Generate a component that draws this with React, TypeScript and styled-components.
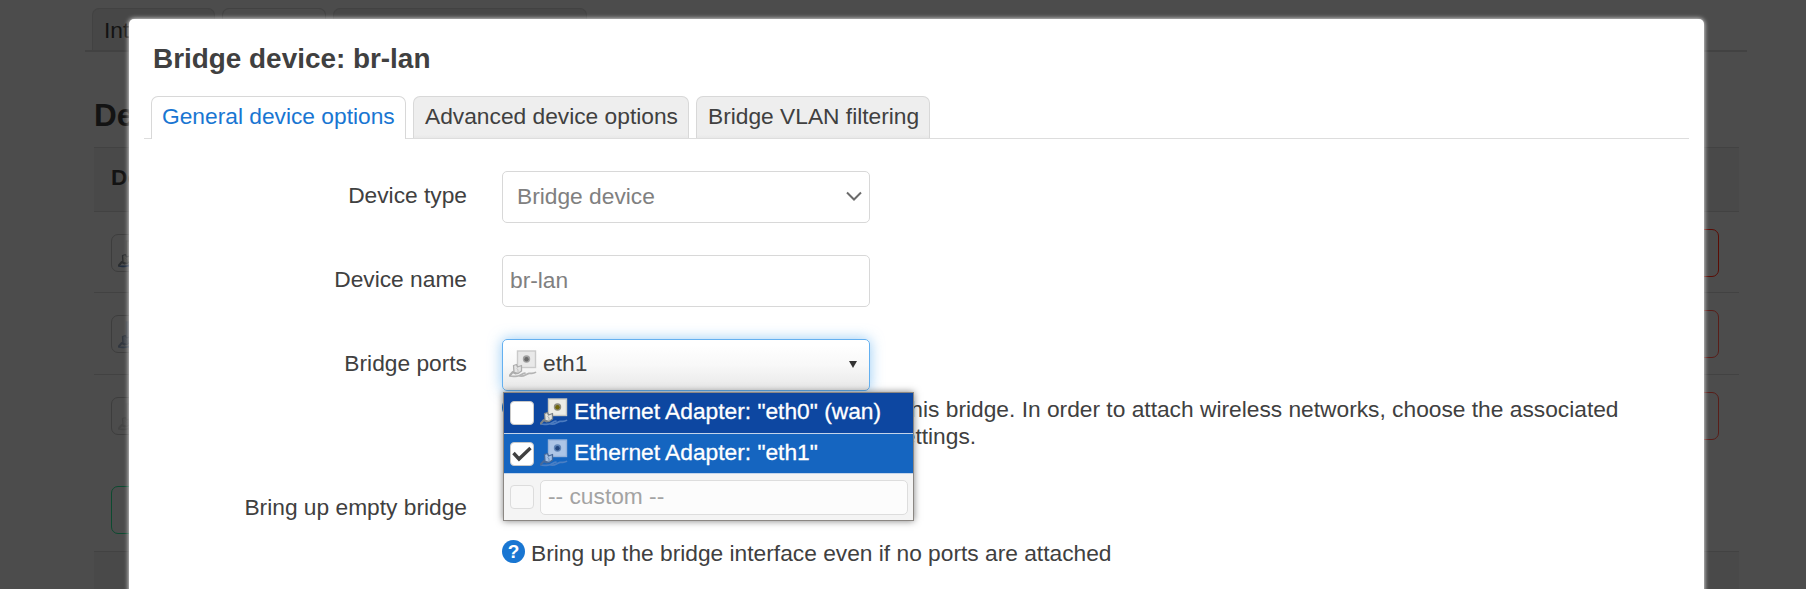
import React from "react";
import styled, { createGlobalStyle } from "styled-components";

const Global = createGlobalStyle`
  * { box-sizing: border-box; }
  html, body { margin: 0; height: 589px; overflow: hidden; background: #4c4c4c; }
  body { font: 22.75px/27px "Liberation Sans", Arial, sans-serif; color: #404040; }
`;

const Page = styled.div`
  position: relative;
  width: 1806px;
  height: 589px;
  overflow: hidden;
  background: #4c4c4c;
  color: #131313;
`;
const PageTabs = styled.div`
  display: flex;
  gap: 7px;
  height: 52px;
  margin: 0 59px 0 85px;
  padding: 8px 0 0 7px;
  border-bottom: 2px solid #424242;
`;
const PageTab = styled.div<{ $w: number; $active?: boolean }>`
  width: ${(p) => p.$w}px;
  height: ${(p) => (p.$active ? 44 : 42)}px;
  padding: 8px 11px;
  border: 1px solid #424242;
  border-bottom: 0;
  border-radius: 7px 7px 0 0;
  background: ${(p) => (p.$active ? "#4c4c4c" : "#474747")};
`;
const PageTitle = styled.h3`
  margin: 0 0 0 94px;
  height: 95px;
  padding-top: 43px;
  font-size: 31.5px;
  line-height: 40px;
`;
const Table = styled.div`
  margin: 0 67px 0 94px;
`;
const Row = styled.div<{ $h: number; $shade?: boolean }>`
  display: flex;
  align-items: center;
  justify-content: space-between;
  height: ${(p) => p.$h}px;
  padding: ${(p) => (p.$shade ? "0 20px 4px 17px" : "1px 20px 0 17px")};
  border-top: 1px solid #424242;
  background: ${(p) => (p.$shade ? "#494949" : "transparent")};
  font-weight: bold;
`;
const Badge = styled.div<{ $dim: number }>`
  width: 120px;
  height: 38px;
  padding: 5px 6px;
  border: 1px solid #3d3d3d;
  border-radius: 7px;
  svg { display: block; filter: brightness(0.32); opacity: ${(p) => p.$dim}; }
`;
const ActionButton = styled.div<{ $c: string }>`
  width: 100px;
  height: 48px;
  border: 1px solid ${(p) => p.$c};
  border-radius: 7px;
`;
const AddBar = styled.div`
  height: 95px;
  padding: 30px 17px 0;
`;

const Modal = styled.div`
  position: absolute;
  top: 19px;
  left: 129px;
  width: 1575px;
  height: 640px;
  padding: 19px 15px;
  border-radius: 5px;
  background: #fff;
  box-shadow: 0 0 5px #fff;
  color: #404040;
`;
const Title = styled.h4`
  height: 58px;
  margin: 0 0 0 9px;
  padding-top: 1px;
  font-size: 27.9px;
  line-height: 40px;
`;
const Tabs = styled.div`
  display: flex;
  gap: 7px;
  height: 43px;
  padding-left: 7px;
  border-bottom: 1px solid #ddd;
`;
const Tab = styled.div<{ $w: number; $active?: boolean }>`
  width: ${(p) => p.$w}px;
  height: ${(p) => (p.$active ? 43 : 42)}px;
  border: 1px solid #d8d8d8;
  border-bottom: 0;
  border-radius: 7px 7px 0 0;
  padding: 6px 0 0 ${(p) => (p.$active ? 10 : 11)}px;
  white-space: nowrap;
  color: ${(p) => (p.$active ? "#1976d2" : "#404040")};
  background: ${(p) => (p.$active ? "#fff" : "linear-gradient(#eee 92%, #e8e8e8)")};
`;
const Form = styled.div`
  padding-top: 32px;
`;
const Field = styled.div<{ $h: number }>`
  display: grid;
  grid-template-columns: 323px 1fr;
  column-gap: 35px;
  height: ${(p) => p.$h}px;
`;
const Label = styled.label`
  padding-top: 11px;
  text-align: right;
`;
const Control = styled.div`
  position: relative;
`;
const Box = styled.div<{ $pad: number }>`
  display: flex;
  align-items: center;
  justify-content: space-between;
  width: 368px;
  height: 52px;
  padding: 0 7px 1px ${(p) => p.$pad}px;
  border: 1px solid #d8d8d8;
  border-radius: 5px;
  color: #808080;
`;
const Dropdown = styled.div`
  display: flex;
  align-items: center;
  width: 368px;
  height: 52px;
  padding: 0 12px 2px 6px;
  border: 1px solid #64b0f0;
  border-radius: 5px;
  background: linear-gradient(#fff 10%, #f8f8f8 50%, #e8e8e8);
  box-shadow: 0 0 14px rgba(82, 168, 236, 0.6);
`;
const DropdownText = styled.span`
  flex: 1;
  padding: 0 0 1px 6px;
`;
const Menu = styled.div`
  position: absolute;
  z-index: 2;
  top: 53px;
  left: 1px;
  width: 411px;
  border: 1px solid #8b8783;
  background: #f4f4f4;
  box-shadow: 0 0 7px rgba(0, 0, 0, 0.5);
`;
const Item = styled.div<{ $bg: string; $h: number }>`
  display: flex;
  align-items: center;
  height: ${(p) => p.$h}px;
  padding-left: 6px;
  border-bottom: 1px solid #c3d4ea;
  background: ${(p) => p.$bg};
  color: #fff;
  white-space: nowrap;
  &:last-child { border-bottom: 0; }
`;
const ItemText = styled.span`
  padding: 0 0 3px 6px;
  -webkit-text-stroke: 0.3px #fff;
`;
const ItemIcon = styled.span`
  display: flex;
  padding-bottom: 2px;
`;
const Check = styled.span<{ $dim?: boolean }>`
  display: flex;
  align-items: center;
  justify-content: center;
  width: 24px;
  height: 24px;
  margin-right: 6px;
  border: 1px solid ${(p) => (p.$dim ? "#dcdcdc" : "#c8c8c8")};
  border-radius: 4px;
  background: ${(p) => (p.$dim ? "#f8f8f8" : "#fff")};
`;
const CustomInput = styled.div`
  width: 368px;
  height: 35px;
  padding: 2px 7px;
  border: 1px solid #ddd;
  border-radius: 5px;
  background: #fcfcfc;
  color: #a3a3a3;
`;
const Help = styled.div<{ $top: number }>`
  display: flex;
  gap: 6px;
  padding-top: ${(p) => p.$top}px;
  white-space: nowrap;
`;
const HelpText = styled.div`
  white-space: nowrap;
`;
const HelpIcon = styled.span`
  display: flex;
  align-items: center;
  justify-content: center;
  width: 23px;
  height: 23px;
  border-radius: 50%;
  background: #1976d2;
  color: #fff;
  font-size: 19px;
  font-weight: bold;
`;

type Tone = "grey" | "color" | "blue";
const tones = {
  grey: { plate: "#e9e9e9", edge: "#cacaca", hole: "#a2a2a2", core: "#6a6a6a", plug: "#e4e4e4", line: "#adadad", cable: "#b4b4b4" },
  color: { plate: "#ecece6", edge: "#c9c9c2", hole: "#8d8c80", core: "#6f6608", plug: "#e3e3dc", line: "#7b8288", cable: "#4d7cc0" },
  blue: { plate: "#adc5e6", edge: "#97b3da", hole: "#6085b8", core: "#23467e", plug: "#a3c0e4", line: "#47699a", cable: "#4a7fc4" },
};
const PortIcon = ({ tone }: { tone: Tone }) => {
  const c = tones[tone];
  return (
    <svg width="28" height="28" viewBox="0 0 28 28">
      <rect x="8.5" y="1" width="18" height="16.5" fill={c.plate} stroke={c.edge} strokeWidth="1.4" />
      <circle cx="17.5" cy="9" r="3.7" fill={c.hole} />
      <circle cx="17.5" cy="9.2" r="2.2" fill={c.core} />
      <path d="M11 26c4 .8 6-2 9-2.6 2.500-.4 4 .6 6.500-1" fill="none" stroke={c.cable} strokeWidth="1.7" strokeLinecap="round" />
      <path d="M1 26c3 .8 5 .4 8 0s3.500-2.500 7-2.800" fill="none" stroke={c.cable} strokeWidth="1.7" strokeLinecap="round" />
      <path d="M.8 25.5l3-3.500 3 1.500" fill="none" stroke={c.line} strokeWidth="2" strokeLinecap="round" strokeLinejoin="round" />
      <path d="M4.500 15.500l3-1 1 2.500 4-1.500v5.500l-3.500 2.500-4-1z" fill={c.plug} stroke={c.line} strokeWidth="1.3" strokeLinejoin="round" />
      <path d="M7.500 18.500l1.500 1v3" fill="none" stroke={c.line} strokeOpacity=".6" />
    </svg>
  );
};

const rows: { height: number; tone: Tone; dim: number; action: string }[] = [
  { height: 81, tone: "color", dim: 0.9, action: "#5a0c04" },
  { height: 82, tone: "blue", dim: 0.5, action: "#581d18" },
  { height: 82, tone: "grey", dim: 0.4, action: "#581d18" },
];

const App = () => (
  <>
    <Global />
    <Page>
      <PageTabs>
        <PageTab $w={123}>Interfaces</PageTab>
        <PageTab $w={104} $active />
        <PageTab $w={254} />
      </PageTabs>
      <PageTitle>Devices</PageTitle>
      <Table>
        <Row $h={64} $shade>Device</Row>
        {rows.map((r, i) => (
          <Row key={i} $h={r.height}>
            <Badge $dim={r.dim}>
              <PortIcon tone={r.tone} />
            </Badge>
            <ActionButton $c={r.action} />
          </Row>
        ))}
        <AddBar>
          <ActionButton $c="#0c4a30" />
        </AddBar>
        <Row $h={80} $shade />
      </Table>
      <Modal>
        <Title>Bridge device: br-lan</Title>
        <Tabs>
          <Tab $w={255} $active>General device options</Tab>
          <Tab $w={276}>Advanced device options</Tab>
          <Tab $w={234}>Bridge VLAN filtering</Tab>
        </Tabs>
        <Form>
          <Field $h={84}>
            <Label>Device type</Label>
            <Control>
              <Box $pad={14}>
                Bridge device
                <svg width="16" height="11" viewBox="0 0 16 11" fill="none" stroke="#6b6b6b" strokeWidth="2">
                  <path d="M1 1.5l7 7 7-7" />
                </svg>
              </Box>
            </Control>
          </Field>
          <Field $h={84}>
            <Label>Device name</Label>
            <Control><Box $pad={7}>br-lan</Box></Control>
          </Field>
          <Field $h={144}>
            <Label>Bridge ports</Label>
            <Control>
              <Dropdown>
                <PortIcon tone="grey" />
                <DropdownText>eth1</DropdownText>
                <svg width="8" height="7" viewBox="0 0 8 7"><path d="M0 0h8L4 7z" fill="#333" /></svg>
              </Dropdown>
              <Menu>
                <Item $h={41} $bg="#0d47a1">
                  <Check />
                  <ItemIcon><PortIcon tone="color" /></ItemIcon>
                  <ItemText>Ethernet Adapter: "eth0" (wan)</ItemText>
                </Item>
                <Item $h={40} $bg="#1565c0">
                  <Check>
                    <svg width="20" height="16" viewBox="0 0 20 16" fill="none" stroke="#404040" strokeWidth="3.4">
                      <path d="M1.5 7l5.5 6L18.5 2" />
                    </svg>
                  </Check>
                  <ItemIcon><PortIcon tone="blue" /></ItemIcon>
                  <ItemText>Ethernet Adapter: "eth1"</ItemText>
                </Item>
                <Item $h={46} $bg="#f4f4f4">
                  <Check $dim />
                  <CustomInput>-- custom --</CustomInput>
                </Item>
              </Menu>
              <Help $top={5}>
                <HelpIcon>?</HelpIcon>
                <HelpText>
                  Specifies the wired ports to attach to this bridge. In order to attach wireless networks, choose the associated
                  <br />
                  interface as network in the wireless settings.
                </HelpText>
              </Help>
            </Control>
          </Field>
          <Field $h={100}>
            <Label>Bring up empty bridge</Label>
            <Control>
              <Help $top={57}>
                <HelpIcon>?</HelpIcon>
                <HelpText>Bring up the bridge interface even if no ports are attached</HelpText>
              </Help>
            </Control>
          </Field>
        </Form>
      </Modal>
    </Page>
  </>
);
export default App;
